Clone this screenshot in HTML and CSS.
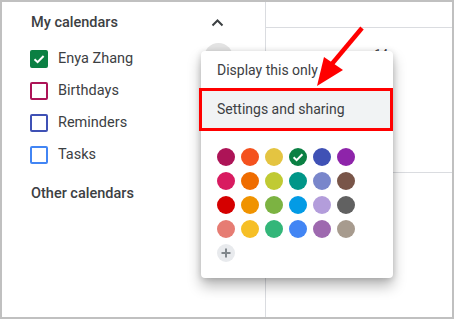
FILE: index.html
```html
<!DOCTYPE html>
<html lang="en">

<head>
  <meta charset="UTF-8">
  <meta name="viewport" content="width=device-width, initial-scale=1.0">
  <title>My calendars</title>
  <link rel="stylesheet" href="styles.css">
</head>

<body>
  <div class="frame">
    <div class="sidebar">
      <div class="section-head">
        <span>My calendars</span>
        <svg class="chevron" width="13" height="8" viewBox="0 0 13 8">
          <path d="M1.5 6.5 L6.5 1.5 L11.5 6.5" fill="none" stroke="#3c4043" stroke-width="2" />
        </svg>
      </div>
      <div class="cal-list">
        <div class="cal-item">
          <span class="box checked">
            <svg width="14" height="14" viewBox="0 0 14 14">
              <path d="M2.5 7.2 L5.6 10.2 L11.6 4" fill="none" stroke="#fff" stroke-width="2" />
            </svg>
          </span>
          <span class="cal-name">Enya Zhang</span>
          <span class="hover-dot"></span>
        </div>
        <div class="cal-item">
          <span class="box birthdays"></span>
          <span class="cal-name">Birthdays</span>
        </div>
        <div class="cal-item">
          <span class="box reminders"></span>
          <span class="cal-name">Reminders</span>
        </div>
        <div class="cal-item">
          <span class="box tasks"></span>
          <span class="cal-name">Tasks</span>
        </div>
      </div>
      <div class="section-head other">
        <span>Other calendars</span>
      </div>
    </div>

    <div class="grid">
      <div class="grid-top"></div>
      <div class="grid-cell">
        <span class="day-num">14</span>
      </div>
      <div class="grid-cell last"></div>
    </div>

    <div class="menu">
      <div class="menu-item">Display this only</div>
      <div class="menu-item active">Settings and sharing</div>
      <div class="swatches">
        <span class="sw" style="background:#ad1457"></span>
        <span class="sw" style="background:#f4511e"></span>
        <span class="sw" style="background:#e4c441"></span>
        <span class="sw" style="background:#0b8043">
          <svg width="18" height="18" viewBox="0 0 18 18">
            <path d="M4.6 9.3 L7.6 12.2 L13.4 6.2" fill="none" stroke="#fff" stroke-width="2" />
          </svg>
        </span>
        <span class="sw" style="background:#3f51b5"></span>
        <span class="sw" style="background:#8e24aa"></span>

        <span class="sw" style="background:#d81b60"></span>
        <span class="sw" style="background:#ef6c00"></span>
        <span class="sw" style="background:#c0ca33"></span>
        <span class="sw" style="background:#009688"></span>
        <span class="sw" style="background:#7986cb"></span>
        <span class="sw" style="background:#795548"></span>

        <span class="sw" style="background:#d50000"></span>
        <span class="sw" style="background:#f09300"></span>
        <span class="sw" style="background:#7cb342"></span>
        <span class="sw" style="background:#039be5"></span>
        <span class="sw" style="background:#b39ddb"></span>
        <span class="sw" style="background:#616161"></span>

        <span class="sw" style="background:#e67c73"></span>
        <span class="sw" style="background:#f6bf26"></span>
        <span class="sw" style="background:#33b679"></span>
        <span class="sw" style="background:#4285f4"></span>
        <span class="sw" style="background:#9e69af"></span>
        <span class="sw" style="background:#a79b8e"></span>

        <span class="sw add">
          <svg width="18" height="18" viewBox="0 0 18 18">
            <path d="M9 4.5 V13.5 M4.5 9 H13.5" fill="none" stroke="#80868b" stroke-width="2" />
          </svg>
        </span>
      </div>
    </div>

    <!-- red annotation -->
    <div class="mark-box"></div>
    <svg class="mark-arrow" width="454" height="319" viewBox="0 0 454 319">
      <line x1="362" y1="28" x2="331" y2="65" stroke="#ff0000" stroke-width="4.5" />
      <polygon points="317,86 324,57 343,70" fill="#ff0000" />
    </svg>
  </div>
</body>

</html>
```

FILE: styles.css
```css
body {
  margin: 0;
  font-family: Roboto, "Liberation Sans", Arial, sans-serif;
  color: #3c4043;
  background: #fff;
}

.frame {
  position: relative;
  width: 454px;
  height: 319px;
  box-sizing: border-box;
  border: 2px solid #c0c0c0;
  display: flex;
  overflow: hidden;
}

/* sidebar */
.sidebar {
  width: 264px;
  border-right: 1px solid #dadce0;
  padding-left: 28px;
  box-sizing: border-box;
}

.section-head {
  height: 41px;
  display: flex;
  align-items: center;
  justify-content: space-between;
  padding-left: 1px;
  padding-right: 41px;
  font-size: 14.5px;
  font-weight: 500;
}

.section-head.other {
  height: 45px;
}

.chevron {
  display: block;
}

.cal-item {
  height: 32px;
  display: flex;
  align-items: center;
  position: relative;
}

.box {
  width: 18px;
  height: 18px;
  box-sizing: border-box;
  border: 2px solid;
  border-radius: 2px;
  display: flex;
  align-items: center;
  justify-content: center;
}

.box.checked {
  background: #0b8043;
  border-color: #0b8043;
}

.box.birthdays {
  border-color: #ad1457;
}

.box.reminders {
  border-color: #3f51b5;
}

.box.tasks {
  border-color: #4285f4;
}

.cal-name {
  margin-left: 10px;
  font-size: 14.5px;
  margin-top: -2px;
}

.hover-dot {
  margin-left: auto;
  margin-right: 32px;
  margin-top: -3px;
  width: 29px;
  height: 29px;
  border-radius: 50%;
  background: #e3e3e3;
}

/* calendar grid */
.grid {
  flex: 1;
  display: flex;
  flex-direction: column;
}

.grid-top {
  height: 33px;
  border-bottom: 1px solid #dadce0;
}

.grid-cell {
  height: 194px;
  border-bottom: 1px solid #dadce0;
  display: flex;
  justify-content: flex-end;
  padding-right: 64px;
}

.grid-cell.last {
  border-bottom: none;
}

.day-num {
  font-size: 12px;
  margin-top: 19px;
  line-height: 14px;
}

/* popup menu */
.menu {
  position: absolute;
  left: 199px;
  top: 49px;
  width: 192px;
  background: #fff;
  border-radius: 4px;
  box-shadow: 0 8px 14px rgba(0, 0, 0, 0.28), 0 1px 6px rgba(0, 0, 0, 0.16);
  padding-bottom: 16px;
}

.menu-item {
  height: 38px;
  display: flex;
  align-items: center;
  padding-left: 16px;
  font-size: 14px;
}

.menu-item.active {
  height: 40px;
  background: #f1f3f4;
}

.swatches {
  display: grid;
  grid-template-columns: repeat(6, 18px);
  grid-auto-rows: 18px;
  gap: 6px;
  padding: 19px 0 0 16px;
}

.sw {
  width: 18px;
  height: 18px;
  border-radius: 50%;
  display: block;
}

.sw svg {
  display: block;
}

.sw.add {
  background: #e8eaed;
}

/* annotation */
.mark-box {
  position: absolute;
  left: 197px;
  top: 86px;
  width: 194px;
  height: 43px;
  box-sizing: border-box;
  border: 3px solid #ff0000;
}

.mark-arrow {
  position: absolute;
  left: -2px;
  top: -2px;
}
```
